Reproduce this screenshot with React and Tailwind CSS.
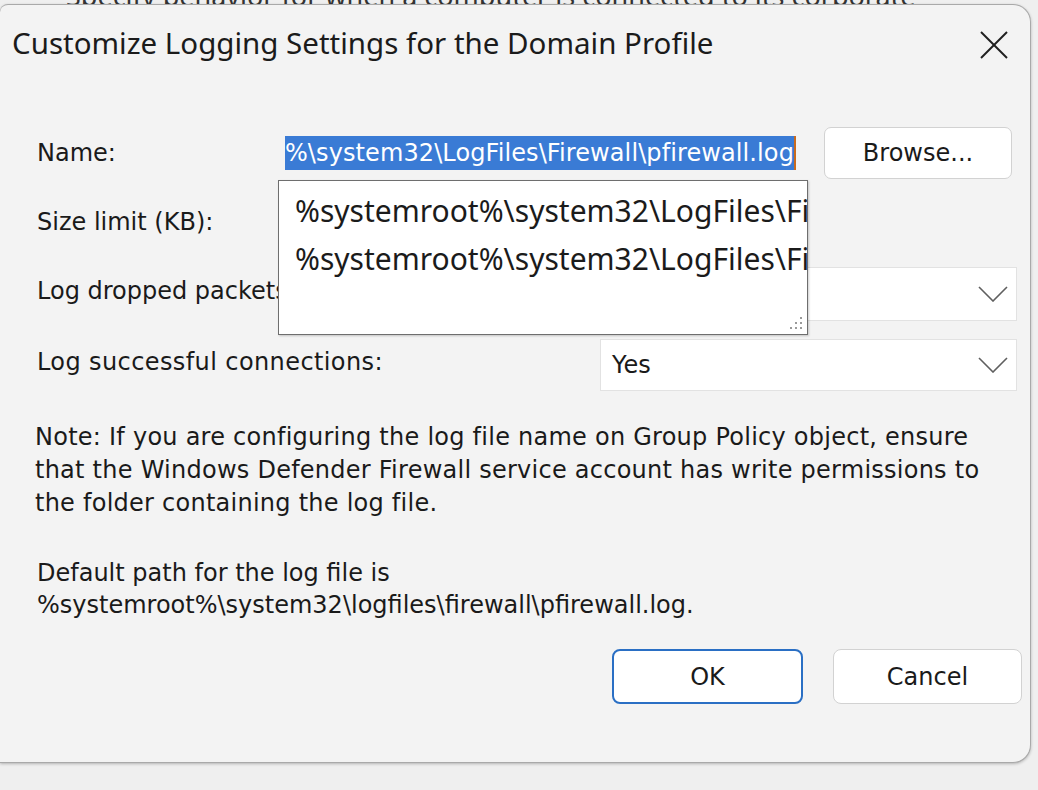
import React from 'react';

const Chevron = () => (
  <svg width="30" height="16" viewBox="0 0 30 16" fill="none">
    <polyline points="1,1 15,15 29,1" stroke="#5f5f5f" strokeWidth="1.6" />
  </svg>
);

const CloseIcon = () => (
  <svg width="28" height="28" viewBox="0 0 28 28" fill="none">
    <line x1="1" y1="1" x2="27" y2="27" stroke="#1f1f1f" strokeWidth="2" />
    <line x1="27" y1="1" x2="1" y2="27" stroke="#1f1f1f" strokeWidth="2" />
  </svg>
);

const Grip = () => (
  <svg width="20" height="20" viewBox="0 0 20 20">
    <rect x="15" y="5" width="2" height="2" fill="#9a9a9a" />
    <rect x="10" y="10" width="2" height="2" fill="#9a9a9a" />
    <rect x="15" y="10" width="2" height="2" fill="#9a9a9a" />
    <rect x="5" y="15" width="2" height="2" fill="#9a9a9a" />
    <rect x="10" y="15" width="2" height="2" fill="#9a9a9a" />
    <rect x="15" y="15" width="2" height="2" fill="#9a9a9a" />
  </svg>
);

const label = "text-[24px] text-[#1a1a1a] font-['DejaVu_Sans',Tahoma,sans-serif]";

export default function App() {
  return (
    <div className="w-[1038px] h-[790px] bg-[#efefef] overflow-hidden">
      {/* fenêtre derrière */}
      <div className="h-[4px] overflow-hidden pl-[66px]">
        <div className="-mt-[24px] text-[27px] text-[#333] whitespace-nowrap font-['Noto_Sans',sans-serif]">
          Specify behavior for when a computer is connected to its corporate
        </div>
      </div>

      {/* Dialogue */}
      <div className="relative w-[1031px] h-[759px] bg-[#f3f3f3] border border-[#a9a9a9] border-l-0 rounded-tl-[8px] rounded-tr-[18px] rounded-br-[18px] shadow-[0_1px_3px_rgba(0,0,0,0.25)]">
        <div className="flex items-center justify-between h-[80px] pl-[12px] pr-[22px]">
          <span className="text-[29.5px] text-[#1b1b1b] font-['Noto_Sans',sans-serif] -mt-[3px]">
            Customize Logging Settings for the Domain Profile
          </span>
          <CloseIcon />
        </div>

        <div className="pl-[37px] pr-[8px] pt-[42px]">
          {/* Name */}
          <div className="flex items-center h-[52px]">
            <div className={`${label} w-[241px]`}>Name:</div>
            <div className="w-[528px] h-[44px] flex items-center justify-end pr-[10px] overflow-hidden">
              <span className="bg-[#3a7bd5] text-white text-[24px] leading-[34px] tracking-[0.1px] whitespace-nowrap font-['DejaVu_Sans',Tahoma,sans-serif]">
                %\system32\LogFiles\Firewall\pfirewall.log
              </span>
              <span className="w-[2px] h-[34px] bg-[#c96a1e]" />
            </div>
            <button className="ml-[18px] w-[188px] h-[52px] bg-white border border-[#d2d2d2] rounded-[7px] text-[24px] text-[#1a1a1a] font-['DejaVu_Sans',Tahoma,sans-serif]">
              Browse...
            </button>
          </div>

          {/* Size limit */}
          <div className="flex items-center h-[52px] mt-[17px]">
            <div className={label}>Size limit (KB):</div>
          </div>

          {/* Log dropped packets */}
          <div className="flex items-center h-[54px] mt-[19px] pr-[5px]">
            <div className={`${label} w-[563px] -mt-[6px]`}>Log dropped packets:</div>
            <div className="flex-1 h-[54px] bg-white border border-[#e2e2e2] flex items-center justify-end pr-[8px]">
              <Chevron />
            </div>
          </div>

          {/* Log successful connections */}
          <div className="flex items-center h-[52px] mt-[18px] pr-[5px]">
            <div className={`${label} w-[563px] -mt-[6px] tracking-[0.4px]`}>Log successful connections:</div>
            <div className="flex-1 h-[52px] bg-white border border-[#e2e2e2] flex items-center justify-between pl-[11px] pr-[8px]">
              <span className={label}>Yes</span>
              <Chevron />
            </div>
          </div>

          <p className={`${label} leading-[33px] mt-[30px] -ml-[2px] tracking-[0.25px] whitespace-nowrap`}>
            Note: If you are configuring the log file name on Group Policy object, ensure
            <br />
            that the Windows Defender Firewall service account has write permissions to
            <br />
            the folder containing the log file.
          </p>

          <p className={`${label} leading-[32px] mt-[37px]`}>
            Default path for the log file is
            <br />
            %systemroot%\system32\logfiles\firewall\pfirewall.log.
          </p>

          <div className="flex justify-end gap-[30px] mt-[28px]">
            <button className="w-[191px] h-[55px] bg-white border-2 border-[#2a6fc4] rounded-[8px] text-[24px] text-[#1a1a1a] font-['DejaVu_Sans',Tahoma,sans-serif]">
              OK
            </button>
            <button className="w-[189px] h-[55px] bg-white border border-[#d2d2d2] rounded-[8px] text-[24px] text-[#1a1a1a] font-['DejaVu_Sans',Tahoma,sans-serif]">
              Cancel
            </button>
          </div>
        </div>

        {/* Liste d'autocomplétion */}
        <div className="absolute left-[278px] top-[175px] w-[530px] h-[155px] bg-white border border-[#6e6e6e] overflow-hidden pt-[6px] pl-[16px] shadow-[1px_1px_2px_rgba(0,0,0,0.2)]">
          <div className="text-[30px] leading-[48px] text-[#1b1b1b] whitespace-nowrap font-['Noto_Sans',sans-serif]">
            %systemroot%\system32\LogFiles\Firewall\pfirewall.log
          </div>
          <div className="text-[30px] leading-[48px] text-[#1b1b1b] whitespace-nowrap font-['Noto_Sans',sans-serif]">
            %systemroot%\system32\LogFiles\Firewall\domainfw.log
          </div>
          <div className="absolute right-[2px] bottom-[2px]">
            <Grip />
          </div>
        </div>
      </div>
    </div>
  );
}
